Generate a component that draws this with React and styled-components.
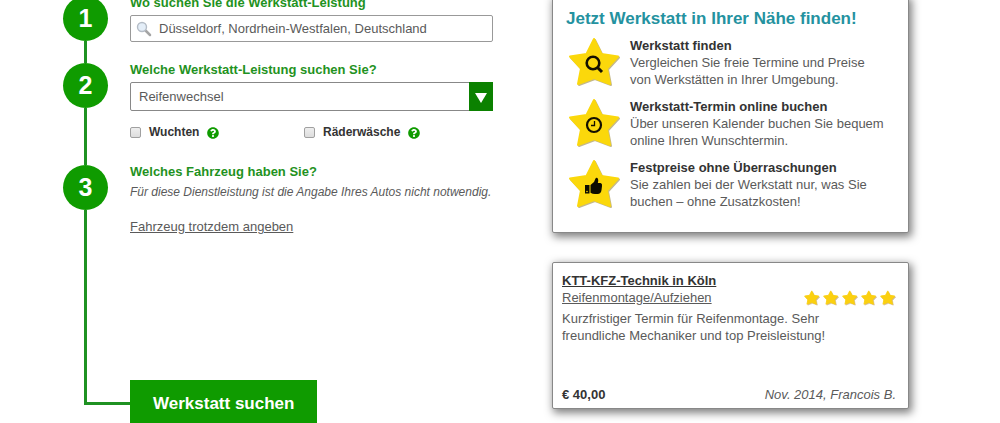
import React from 'react';
import styled, { createGlobalStyle } from 'styled-components';
import { FaQuestionCircle } from 'react-icons/fa';

const GlobalStyle = createGlobalStyle`
  * {
    box-sizing: border-box;
  }

  body {
    margin: 0;
    height: 100vh;
    overflow: hidden;
    background: #ffffff;
    color: #5a5a5a;
    font-family: "Liberation Sans", Arial, sans-serif;
    font-size: 13px;
    line-height: 17px;
  }
`;

// Page Layout
const Page = styled.main`
  display: grid;
  grid-template-columns: minmax(0, 430fr) minmax(0, 357fr);
  gap: 59px;
  align-items: start;
  margin-top: -4px;
  padding: 0 91px 0 63px;
`;

// Step Form
const Steps = styled.ol`
  list-style: none;
  margin: 0;
  padding: 0;
`;

const Step = styled.li`
  display: flex;
  gap: 22px;
  min-height: ${({ $height }) => $height}px;
`;

const Marker = styled.div`
  display: flex;
  flex-direction: column;
  align-items: center;
  width: 45px;
`;

const Circle = styled.span`
  width: 45px;
  height: 45px;
  border-radius: 50%;
  background: #0f9b00;
  color: #ffffff;
  font-size: 25px;
  font-weight: bold;
  line-height: 45px;
  text-align: center;
`;

const Rail = styled.span`
  flex: 1;
  width: 3px;
  background: #1f9222;
`;

const StepBody = styled.div`
  flex: 1;
  min-width: 0;
`;

const StepTitle = styled.label`
  display: block;
  margin: 0 0 5px;
  color: #1f9222;
  font-size: 13px;
  font-weight: bold;
  line-height: 14px;
`;

const SearchBox = styled.div`
  display: flex;
  align-items: center;
  gap: 7px;
  height: 27px;
  padding: 0 5px;
  border: 1px solid #999999;
  border-radius: 2px;
`;

const SearchInput = styled.input`
  flex: 1;
  min-width: 0;
  padding: 0;
  border: none;
  outline: none;
  color: #5a5a5a;
  font: inherit;
`;

const SelectBox = styled.div`
  position: relative;
`;

const Select = styled.select`
  display: block;
  width: 100%;
  height: 29px;
  padding: 0 32px 0 8px;
  border: 1px solid #888888;
  border-radius: 2px;
  background: #ffffff;
  color: #5a5a5a;
  font: inherit;
  appearance: none;
`;

const SelectArrow = styled.span`
  position: absolute;
  top: 0;
  right: 0;
  bottom: 0;
  display: flex;
  align-items: center;
  justify-content: center;
  width: 24px;
  padding-top: 2px;
  background: #0b8100;
  pointer-events: none;
`;

const Options = styled.div`
  display: grid;
  grid-template-columns: 174px 1fr;
  margin-top: 13px;
`;

const Option = styled.div`
  display: flex;
  align-items: center;
  gap: 8px;
  color: #333333;
  font-size: 12px;
  font-weight: bold;

  svg {
    color: #0f9b00;
  }
`;

const Checkbox = styled.input`
  width: 11px;
  height: 11px;
  margin: 0;
  border: 1px solid #a0a0a0;
  border-radius: 2px;
  background: linear-gradient(#eeeeee, #dddddd);
  appearance: none;

  &:checked {
    background: #0f9b00;
  }
`;

const Hint = styled.p`
  margin: 0;
  font-size: 12px;
  font-style: italic;
`;

const VehicleLink = styled.a`
  display: inline-block;
  margin-top: 17px;
  color: #5a5a5a;
`;

const SubmitRow = styled.div`
  display: flex;
  align-items: flex-start;
`;

const Elbow = styled.span`
  width: 46px;
  height: 25px;
  margin-left: 21px;
  border: solid #1f9222;
  border-width: 0 0 3px 3px;
`;

const SubmitButton = styled.button`
  height: 48px;
  padding: 0 23px;
  border: none;
  background: #0f9b00;
  color: #ffffff;
  font-family: inherit;
  font-size: 17px;
  font-weight: bold;
  cursor: pointer;
`;

// Info Cards
const Sidebar = styled.aside`
  display: flex;
  flex-direction: column;
  gap: 29px;
`;

const Card = styled.section`
  border: 1px solid #888888;
  border-radius: 2px;
  background: #ffffff;
  box-shadow: 2px 3px 8px 1px rgba(0, 0, 0, 0.5);
`;

const BenefitCard = styled(Card)`
  padding: 13px 13px 22px;
`;

const BenefitTitle = styled.h2`
  margin: 0 0 9px;
  color: #2492a0;
  font-size: 17px;
  line-height: 18px;
`;

const BenefitList = styled.ul`
  display: flex;
  flex-direction: column;
  gap: 10px;
  list-style: none;
  margin: 0;
  padding: 0;
`;

const Benefit = styled.li`
  display: flex;
  gap: 8px;

  svg {
    flex: none;
  }

  p {
    margin: 0;
    padding-right: 8px;
  }
`;

const Strong = styled.strong`
  color: #333333;
`;

const ReviewCard = styled(Card)`
  display: flex;
  flex-direction: column;
  min-height: 147px;
  padding: 9px 12px 5px 9px;
`;

const ReviewLink = styled.a`
  color: ${({ $main }) => ($main ? '#333333' : '#5a5a5a')};
  font-weight: ${({ $main }) => ($main ? 'bold' : 'normal')};
`;

const ReviewRow = styled.div`
  display: flex;
  align-items: center;
  justify-content: space-between;
  margin-bottom: ${({ $gap }) => $gap || 0}px;
`;

const Rating = styled.span`
  display: flex;
  gap: 3px;
`;

const ReviewText = styled.p`
  margin: 0 0 auto;
  padding-right: 20px;
`;

const STAR = 'M26 2 L33.5 17 L50 19.5 L39 31.5 L42 47 L26 41 L10 47 L13 31.5 L2 19.5 L18.5 17 Z';

const SearchIcon = () => (
  <svg width="16" height="16" viewBox="0 0 16 16" fill="none">
    <path d="M9.5 9.5 L14 14" stroke="#a5a5a5" strokeWidth="2.5" strokeLinecap="round" />
    <circle cx="6" cy="6" r="4.5" fill="#e4eef8" stroke="#b4bcc6" strokeWidth="1.4" />
  </svg>
);

const StarBadge = ({ children }) => (
  <svg width="56" height="51" viewBox="0 0 56 51">
    <g strokeWidth="2" strokeLinejoin="round">
      <path d={STAR} transform="translate(3 1)" fill="#c4b88c" stroke="#c4b88c" />
      <path d={STAR} transform="translate(2 0)" fill="#fbd80b" stroke="#fbd80b" />
    </g>
    {children}
  </svg>
);

const SmallStar = () => (
  <svg width="16" height="16" viewBox="0 0 54 52">
    <path d={STAR} transform="translate(3 3)" fill="#d3b98c" stroke="#d3b98c" strokeWidth="2" />
    <path d={STAR} fill="#fbd010" stroke="#fbd010" strokeWidth="3" strokeLinejoin="round" />
  </svg>
);

const benefits = [
  {
    title: 'Werkstatt finden',
    text: 'Vergleichen Sie freie Termine und Preise von Werkstätten in Ihrer Umgebung.',
    icon: (
      <g fill="none" stroke="#141000">
        <circle cx="27" cy="26" r="6.3" strokeWidth="2.6" />
        <path d="M31 30 L36 35" strokeWidth="3" />
      </g>
    ),
  },
  {
    title: 'Werkstatt-Termin online buchen',
    text: 'Über unseren Kalender buchen Sie bequem online Ihren Wunschtermin.',
    icon: (
      <g fill="none" stroke="#141000">
        <circle cx="28" cy="27" r="7" strokeWidth="2.2" />
        <path d="M28.5 23 V27.5 H25" strokeWidth="1.3" />
      </g>
    ),
  },
  {
    title: 'Festpreise ohne Überraschungen',
    text: 'Sie zahlen bei der Werkstatt nur, was Sie buchen – ohne Zusatzkosten!',
    icon: (
      <g fill="#0c0c00">
        <path d="M19 26 H23.5 V34.5 H19 Z" />
        <path d="M24.5 26 L28 23 L29.5 19.5 Q30 18.5 31 18.8 Q33 20 31.8 24 H34.5 Q36.5 24.5 36 27 L35.5 31 Q35 35 31.5 35 H29 Q26.5 35 24.5 33.8 Z" />
        <circle cx="21" cy="32.5" r="0.8" fill="#fbd80b" />
      </g>
    ),
  },
];

// Main Component
const App = () => {
  return (
    <>
      <GlobalStyle />
      <Page>
        <form onSubmit={(e) => e.preventDefault()}>
          <Steps>
            <Step $height={67}>
              <Marker>
                <Circle>1</Circle>
                <Rail />
              </Marker>
              <StepBody>
                <StepTitle htmlFor="location">Wo suchen Sie die Werkstatt-Leistung</StepTitle>
                <SearchBox>
                  <SearchIcon />
                  <SearchInput id="location" type="text" defaultValue="Düsseldorf, Nordrhein-Westfalen, Deutschland" />
                </SearchBox>
              </StepBody>
            </Step>

            <Step $height={102}>
              <Marker>
                <Circle>2</Circle>
                <Rail />
              </Marker>
              <StepBody>
                <StepTitle htmlFor="service">Welche Werkstatt-Leistung suchen Sie?</StepTitle>
                <SelectBox>
                  <Select id="service" defaultValue="Reifenwechsel">
                    <option>Reifenwechsel</option>
                  </Select>
                  <SelectArrow>
                    <svg width="12" height="10" viewBox="0 0 12 10">
                      <path d="M0 0 H12 L6 10 Z" fill="#ffffff" />
                    </svg>
                  </SelectArrow>
                </SelectBox>
                <Options>
                  <Option>
                    <Checkbox id="wuchten" type="checkbox" />
                    <label htmlFor="wuchten">Wuchten</label>
                    <FaQuestionCircle size={12} />
                  </Option>
                  <Option>
                    <Checkbox id="waesche" type="checkbox" />
                    <label htmlFor="waesche">Räderwäsche</label>
                    <FaQuestionCircle size={12} />
                  </Option>
                </Options>
              </StepBody>
            </Step>

            <Step $height={215}>
              <Marker>
                <Circle>3</Circle>
                <Rail />
              </Marker>
              <StepBody>
                <StepTitle as="h3">Welches Fahrzeug haben Sie?</StepTitle>
                <Hint>Für diese Dienstleistung ist die Angabe Ihres Autos nicht notwendig.</Hint>
                <VehicleLink href="#fahrzeug">Fahrzeug trotzdem angeben</VehicleLink>
              </StepBody>
            </Step>
          </Steps>

          <SubmitRow>
            <Elbow />
            <SubmitButton type="submit">Werkstatt suchen</SubmitButton>
          </SubmitRow>
        </form>

        <Sidebar>
          <BenefitCard>
            <BenefitTitle>Jetzt Werkstatt in Ihrer Nähe finden!</BenefitTitle>
            <BenefitList>
              {benefits.map(({ title, text, icon }) => (
                <Benefit key={title}>
                  <StarBadge>{icon}</StarBadge>
                  <p>
                    <Strong>{title}</Strong>
                    <br />
                    {text}
                  </p>
                </Benefit>
              ))}
            </BenefitList>
          </BenefitCard>

          <ReviewCard>
            <ReviewRow>
              <ReviewLink $main href="#werkstatt">KTT-KFZ-Technik in Köln</ReviewLink>
            </ReviewRow>
            <ReviewRow $gap={4}>
              <ReviewLink href="#leistung">Reifenmontage/Aufziehen</ReviewLink>
              <Rating role="img" aria-label="5 Sterne">
                {[1, 2, 3, 4, 5].map((n) => (
                  <SmallStar key={n} />
                ))}
              </Rating>
            </ReviewRow>
            <ReviewText>
              Kurzfristiger Termin für Reifenmontage. Sehr freundliche Mechaniker und top Preisleistung!
            </ReviewText>
            <ReviewRow>
              <Strong>€ 40,00</Strong>
              <em>Nov. 2014, Francois B.</em>
            </ReviewRow>
          </ReviewCard>
        </Sidebar>
      </Page>
    </>
  );
};

export default App;
